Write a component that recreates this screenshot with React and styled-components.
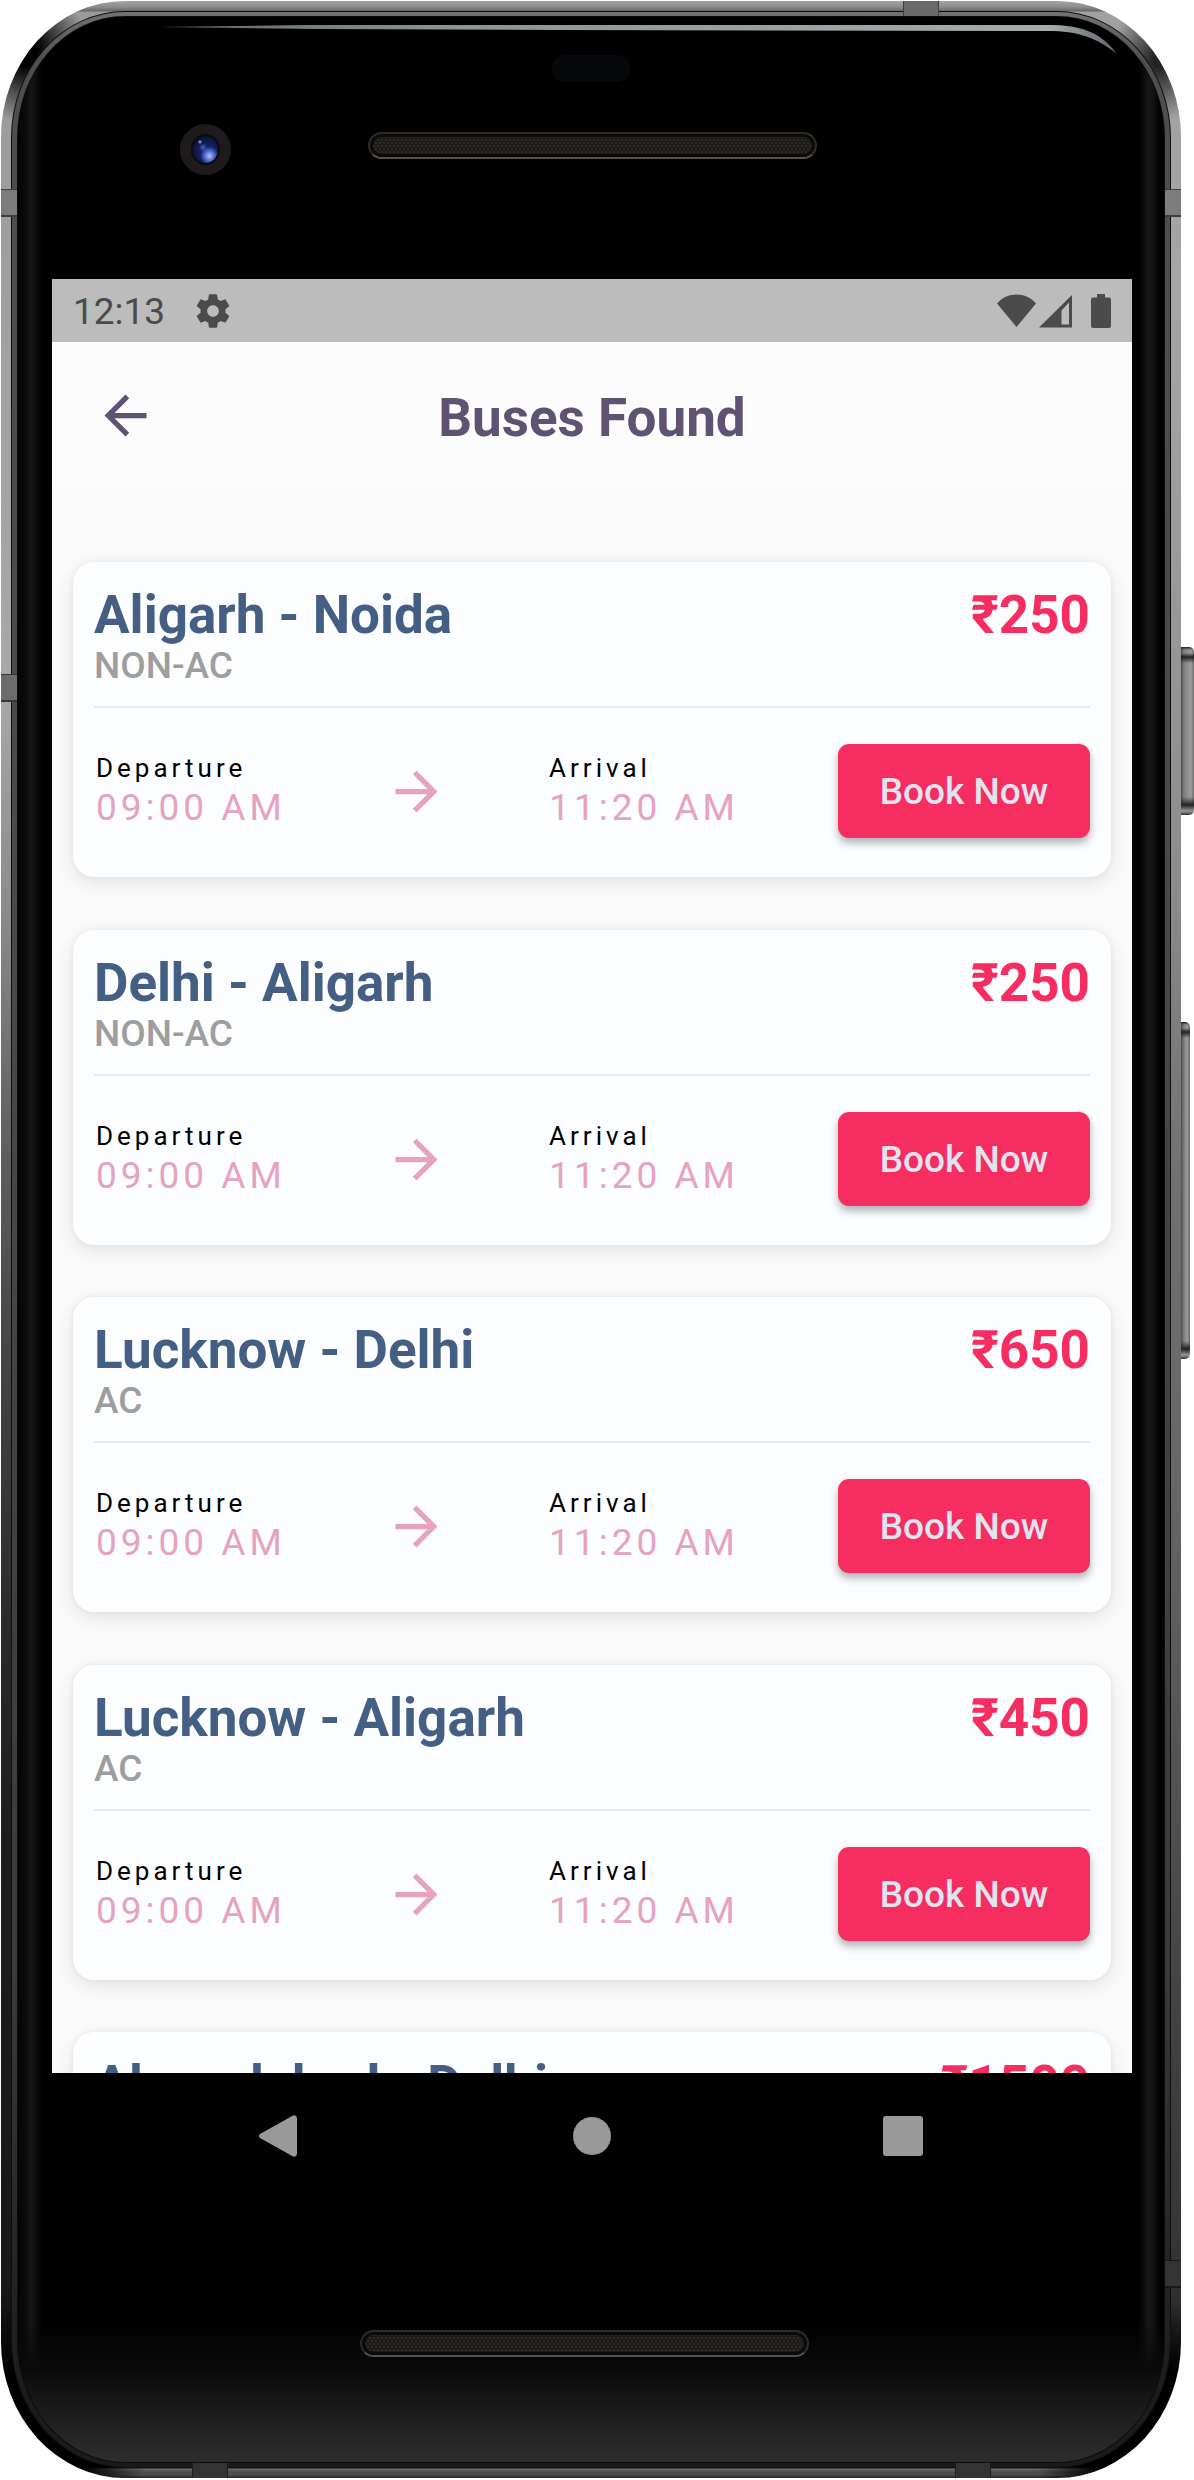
import React from "react";
import styled, { createGlobalStyle, css } from "styled-components";

const GlobalStyle = createGlobalStyle`
  *, *::before, *::after { box-sizing: border-box; }
  body { margin: 0; background: #fff; font-family: Roboto, "Liberation Sans", sans-serif; }
  h1, h2, p, ul, dl, dt, dd { margin: 0; padding: 0; font-weight: inherit; }
  ul { list-style: none; }
  button { font: inherit; border: 0; padding: 0; cursor: pointer; }
  svg { display: block; }
`;

/* ---------- device ---------- */

const Stage = styled.div`
  padding: 1px 13px 1px 1px;
`;

const Device = styled.div`
  position: relative;
  padding: 10px;
  border-radius: 124px / 136px;
  background:
    radial-gradient(62px 72px at 24px 50px, #000 20%, transparent 100%),
    radial-gradient(50px 60px at calc(100% - 22px) 60px, #222 10%, transparent 100%),
    radial-gradient(110px 130px at 40px calc(100% - 50px), #000 50%, transparent 100%),
    radial-gradient(110px 130px at calc(100% - 40px) calc(100% - 50px), #000 50%, transparent 100%),
    linear-gradient(#a4a4a4 0, #8c8c8c 6px, #666 10px, transparent 11px),
    linear-gradient(to top, #222 0, #4c4c4c 3px, #4c4c4c 6px, #6a6a6a 9px, #222 10px, transparent 11px),
    linear-gradient(#a0a0a0 0, #a6a6a6 12%, #8c8c8c 35%, #707070 48%, #666 60%, #444 80%, #333 92%, #000 100%) right / 50% 100% no-repeat,
    linear-gradient(#9a9a9a 0, #a8a8a8 28%, #8a8a8a 37%, #606060 46%, #444 55%, #2c2c2c 65%, #1d1d1d 74%, #181818 92%, #000 100%);
`;

const Bezel = styled.div`
  padding: 5px 6px;
  border: 1px solid #0e0e0e;
  border-radius: 114px / 127px;
  background: linear-gradient(#727272 0, #4e4e4e 2%, #484848 40%, #3a3a3a 80%, #1c1c1c 97%, #1a1a1a 100%);
`;

const Glass = styled.div`
  position: relative;
  padding: 0 32px 0 34px;
  border-radius: 107px / 121px;
  background:
    linear-gradient(to top, #2d2d2d 0, #262626 22px, #181818 60px, #0a0a0a 94px, transparent 140px),
    linear-gradient(to right, #050505 0, #0a0a0a 8px, #171717 13px, #0c0c0c 18px, transparent 24px),
    linear-gradient(to left, #000 4px, #101010 10px, #181818 15px, #0c0c0c 20px, transparent 26px),
    #000;
  box-shadow: 0 0 0 1px #0c0c0c;
`;

const Forehead = styled.div`
  position: relative;
  height: 262px;
`;

const Chin = styled.div`
  display: flex;
  justify-content: center;
  height: 263px;
  padding: 131px 16px 0 0;
`;

const Sensor = styled.div`
  position: absolute;
  top: 38px;
  left: 50%;
  width: 78px;
  height: 27px;
  margin-left: -40px;
  border-radius: 13px;
  background: #07080c;
`;

const Camera = styled.div`
  position: absolute;
  top: 107px;
  left: 128px;
  display: grid;
  place-items: center;
  width: 51px;
  height: 51px;
  border-radius: 50%;
  background: #1f1b1c;
`;

const Lens = styled.div`
  width: 29px;
  height: 31px;
  border-radius: 50%;
  border: 2px solid #0b0a0e;
  background:
    radial-gradient(circle at 66% 74%, #b9c4ff 0, #5f76de 16%, transparent 36%),
    radial-gradient(circle at 40% 42%, #4a63c8 0, transparent 18%),
    radial-gradient(circle at 28% 22%, #b9c4ff 0, transparent 8%),
    radial-gradient(circle at 60% 60%, #1c2c80 0, #0e1746 60%, #070a20 100%);
`;

const Speaker = styled.div`
  width: 449px;
  height: 27px;
  border: 2px solid #2c2b2a;
  border-bottom-color: #57524c;
  border-radius: 14px;
  background:
    radial-gradient(circle, #3f3a33 0, #1c1917 45%, transparent 60%) 0 0 / 4px 6px,
    radial-gradient(circle, #3f3a33 0, #1c1917 45%, transparent 60%) 2px 3px / 4px 6px,
    #0a0909;
  box-shadow: inset 0 0 0 3px #0c0b0a;
`;

const Earpiece = styled(Speaker)`
  position: absolute;
  top: 115px;
  left: 50%;
  margin-left: -224px;
`;

const GlintLine = styled.svg`
  position: absolute;
  top: 24px;
  right: 62px;
  width: 962px;
  height: 32px;
`;

const SideKey = styled.span`
  position: absolute;
  left: 100%;
  top: ${(p) => p.$top}px;
  width: ${(p) => p.$width}px;
  height: ${(p) => p.$height}px;
  border-radius: 0 5px 5px 0;
  background:
    linear-gradient(#222 0, transparent 3px, transparent 6px, #222 10px, transparent 16px, transparent calc(100% - 18px), #222 calc(100% - 10px), #999 calc(100% - 4px), #333),
    linear-gradient(to right, #4c4c4c 0, #7e7e7e 3px, #9c9c9c calc(100% - 3px), #6a6a6a);
`;

const Band = styled.span`
  position: absolute;
  background: ${(p) => p.$tone};
  ${(p) =>
    p.$upright
      ? css`
          width: 36px;
          height: 16px;
          border: solid rgba(0, 0, 0, 0.4);
          border-width: 0 1px;
        `
      : css`
          width: 16px;
          height: 28px;
          border: solid rgba(0, 0, 0, 0.5);
          border-width: 1px 0 2px;
        `}
  ${(p) => p.$side}: 0;
  ${(p) => p.$from}: ${(p) => p.$at}px;
`;

/* ---------- screen ---------- */

const Screen = styled.div`
  display: flex;
  flex-direction: column;
  height: 1794px;
  overflow: hidden;
  background: #fafafa;
`;

const StatusBar = styled.div`
  display: flex;
  flex: none;
  align-items: center;
  justify-content: space-between;
  height: 63px;
  padding: 0 21px;
  background: #bcbcbc;
  color: #4b4b4b;
`;

const StatusGroup = styled.div`
  display: flex;
  align-items: center;
  gap: ${(p) => p.$gap}px;
`;

const Clock = styled.span`
  padding-top: 3px;
  font-size: 37px;
  line-height: 42px;
`;

const AppBar = styled.header`
  display: grid;
  flex: none;
  grid-template-columns: 63px 1fr 63px;
  align-items: center;
  height: 147px;
  padding: 0 42px;
  background: #fcfcfc;
`;

const BackButton = styled.button`
  width: 63px;
  height: 63px;
  background: none;
  color: #5f5373;
`;

const PageTitle = styled.h1`
  padding-top: 4px;
  color: #5f5373;
  font-size: 53px;
  font-weight: 700;
  line-height: 62px;
  text-align: center;
`;

const BusList = styled.ul`
  padding: 73px 21px;
`;

const Card = styled.li`
  height: 315px;
  margin-bottom: 53px;
  padding: 21px;
  border-radius: 21px;
  background: #fcfdff;
  box-shadow: 0 6px 20px rgba(0, 0, 0, 0.09), 0 0 6px rgba(0, 0, 0, 0.06);

  &:nth-child(even) {
    margin-bottom: 52px;
  }
`;

const CardHead = styled.div`
  display: flex;
  justify-content: space-between;
  height: 125px;
  padding-top: 1px;
  border-bottom: 2px solid #e8eaec;
`;

const Route = styled.h2`
  color: #455f84;
  font-size: 53px;
  font-weight: 700;
  line-height: 62px;
`;

const BusType = styled.p`
  color: #9e9e9e;
  font-size: 37px;
  font-weight: 500;
  line-height: 40px;
`;

const Price = styled.strong`
  color: #f52d60;
  font-size: 53px;
  font-weight: 700;
  line-height: 62px;
`;

const CardBody = styled.div`
  display: flex;
  align-items: center;
  justify-content: space-between;
  margin-top: 36px;
`;

const Stop = styled.dl`
  padding-left: 2px;
  letter-spacing: 4px;
`;

const StopLabel = styled.dt`
  color: #000;
  font-size: 26px;
  line-height: 33px;
`;

const StopTime = styled.dd`
  color: #e5a3c0;
  font-size: 37px;
  line-height: 45px;
`;

const BookButton = styled.button`
  min-width: 252px;
  height: 94px;
  padding: 0 40px;
  border-radius: 11px;
  background: #f52d60;
  color: #e0e4ee;
  font-size: 37px;
  font-weight: 500;
  box-shadow: 0 5px 8px rgba(0, 0, 0, 0.3);
`;

const NavBar = styled.nav`
  display: flex;
  align-items: center;
  justify-content: center;
  gap: 248px;
  height: 126px;
`;

const NavButton = styled.button`
  display: grid;
  place-items: center;
  width: 63px;
  height: 63px;
  background: none;
  color: #999;
`;

/* ---------- icons ---------- */

const Arrow = ({ back, color }) => (
  <svg width="63" height="63" viewBox="0 0 24 24" fill={color || "currentColor"} aria-hidden="true">
    {back ? (
      <path d="M20 11H7.83l5.59-5.59L12 4l-8 8 8 8 1.41-1.41L7.83 13H20v-2z" />
    ) : (
      <path d="M12 4l-1.41 1.41L16.17 11H4v2h12.17l-5.58 5.59L12 20l8-8z" />
    )}
  </svg>
);

const Gear = () => (
  <svg width="40" height="40" viewBox="0 0 24 24" fill="currentColor" aria-hidden="true">
    <path d="M19.43 12.98c.04-.32.07-.64.07-.98s-.03-.66-.07-.98l2.11-1.65c.19-.15.24-.42.12-.64l-2-3.46c-.12-.22-.39-.3-.61-.22l-2.49 1c-.52-.4-1.08-.73-1.69-.98l-.38-2.65C14.46 2.18 14.25 2 14 2h-4c-.25 0-.46.18-.49.42l-.38 2.65c-.61.25-1.17.59-1.69.98l-2.49-1c-.23-.09-.49 0-.61.22l-2 3.46c-.13.22-.07.49.12.64l2.11 1.65c-.04.32-.07.65-.07.98s.03.66.07.98l-2.11 1.65c-.19.15-.24.42-.12.64l2 3.46c.12.22.39.3.61.22l2.49-1c.52.4 1.08.73 1.69.98l.38 2.65c.03.24.24.42.49.42h4c.25 0 .46-.18.49-.42l.38-2.65c.61-.25 1.17-.59 1.69-.98l2.49 1c.23.09.49 0 .61-.22l2-3.46c.12-.22.07-.49-.12-.64l-2.11-1.65zM12 15.5c-1.93 0-3.5-1.57-3.5-3.5s1.57-3.5 3.5-3.5 3.5 1.57 3.5 3.5-1.57 3.5-3.5 3.5z" />
  </svg>
);

const Wifi = () => (
  <svg width="39" height="34" viewBox="0 0 39 34" fill="currentColor" aria-hidden="true">
    <path d="M0 9.500C5 3.500 12 .5 19.500.5S34 3.500 39 9.500L19.500 33z" />
  </svg>
);

const Signal = () => (
  <svg width="33" height="34" viewBox="0 0 33 34" fill="currentColor" aria-hidden="true">
    <path fillRule="evenodd" d="M33 1v32.500H0zM30 8.500l-7.500 8V30.500H30z" />
  </svg>
);

const Battery = () => (
  <svg width="20" height="34" viewBox="0 0 20 34" fill="currentColor" aria-hidden="true">
    <path d="M6 0h8v3.500h4a2 2 0 0 1 2 2V32a2 2 0 0 1-2 2H2a2 2 0 0 1-2-2V5.500a2 2 0 0 1 2-2h4z" />
  </svg>
);

const Glint = () => (
  <GlintLine viewBox="0 0 962 32" aria-hidden="true">
    <defs>
      <linearGradient id="glint" x1="0" x2="1" y1="0" y2="0">
        <stop offset="0" stopColor="#5d6668" />
        <stop offset="0.3" stopColor="#8b9496" />
        <stop offset="0.93" stopColor="#a3adae" />
        <stop offset="1" stopColor="#5d6668" />
      </linearGradient>
    </defs>
    <path fill="url(#glint)" d="M2 2L150 0H898C925 1 945 8 960 29C940 13 922 6 890 6L400 5L160 4Z" />
  </GlintLine>
);

const buses = [
  { route: "Aligarh - Noida", type: "NON-AC", price: 250 },
  { route: "Delhi - Aligarh", type: "NON-AC", price: 250 },
  { route: "Lucknow - Delhi", type: "AC", price: 650 },
  { route: "Lucknow - Aligarh", type: "AC", price: 450 },
  { route: "Ahmedabad - Delhi", type: "AC", price: 1500 },
];

const BusCard = ({ route, type, price }) => (
  <Card>
    <CardHead>
      <div>
        <Route>{route}</Route>
        <BusType>{type}</BusType>
      </div>
      <Price>₹{price}</Price>
    </CardHead>
    <CardBody>
      <Stop>
        <StopLabel>Departure</StopLabel>
        <StopTime>09:00 AM</StopTime>
      </Stop>
      <Arrow color="#e5a3c0" />
      <Stop>
        <StopLabel>Arrival</StopLabel>
        <StopTime>11:20 AM</StopTime>
      </Stop>
      <BookButton type="button">Book Now</BookButton>
    </CardBody>
  </Card>
);

export default function App() {
  return (
    <Stage>
      <GlobalStyle />
      <Device>
        <Band $tone="#7c7c7c" $side="left" $from="top" $at={188} />
        <Band $tone="#6c6c6c" $side="left" $from="top" $at={673} />
        <Band $tone="#7c7c7c" $side="right" $from="top" $at={188} />
        <Band $tone="#333" $side="right" $from="bottom" $at={190} />
        <Band $upright $tone="#6a6a6a" $side="top" $from="right" $at={242} />
        <Band $upright $tone="#333" $side="bottom" $from="left" $at={191} />
        <Band $upright $tone="#333" $side="bottom" $from="right" $at={190} />
        <SideKey $top={646} $width={13} $height={168} />
        <SideKey $top={1021} $width={9} $height={337} />
        <Bezel>
          <Glass>
            <Forehead>
              <Sensor />
              <Camera>
                <Lens />
              </Camera>
              <Earpiece />
            </Forehead>
            <Screen>
              <StatusBar>
                <StatusGroup $gap={28}>
                  <Clock>12:13</Clock>
                  <Gear />
                </StatusGroup>
                <StatusGroup $gap={3}>
                  <Wifi />
                  <StatusGroup $gap={19}>
                    <Signal />
                    <Battery />
                  </StatusGroup>
                </StatusGroup>
              </StatusBar>
              <AppBar>
                <BackButton type="button" aria-label="Back">
                  <Arrow back />
                </BackButton>
                <PageTitle>Buses Found</PageTitle>
              </AppBar>
              <BusList>
                {buses.map((bus) => (
                  <BusCard key={bus.route} {...bus} />
                ))}
              </BusList>
            </Screen>
            <NavBar>
              <NavButton type="button" aria-label="Back">
                <svg width="44" height="42" viewBox="0 0 44 42" fill="currentColor" aria-hidden="true">
                  <path d="M1 19L34 .6Q37.500-.5 38 3V39Q37.500 42.500 34 41.400L1 23Q-1 21 1 19Z" />
                </svg>
              </NavButton>
              <NavButton type="button" aria-label="Home">
                <svg width="38" height="38" viewBox="0 0 38 38" fill="currentColor" aria-hidden="true">
                  <circle cx="19" cy="19" r="19" />
                </svg>
              </NavButton>
              <NavButton type="button" aria-label="Recent apps">
                <svg width="40" height="40" viewBox="0 0 40 40" fill="currentColor" aria-hidden="true">
                  <rect width="40" height="40" rx="3" />
                </svg>
              </NavButton>
            </NavBar>
            <Chin>
              <Speaker />
            </Chin>
          </Glass>
        </Bezel>
        <Glint />
      </Device>
    </Stage>
  );
}
